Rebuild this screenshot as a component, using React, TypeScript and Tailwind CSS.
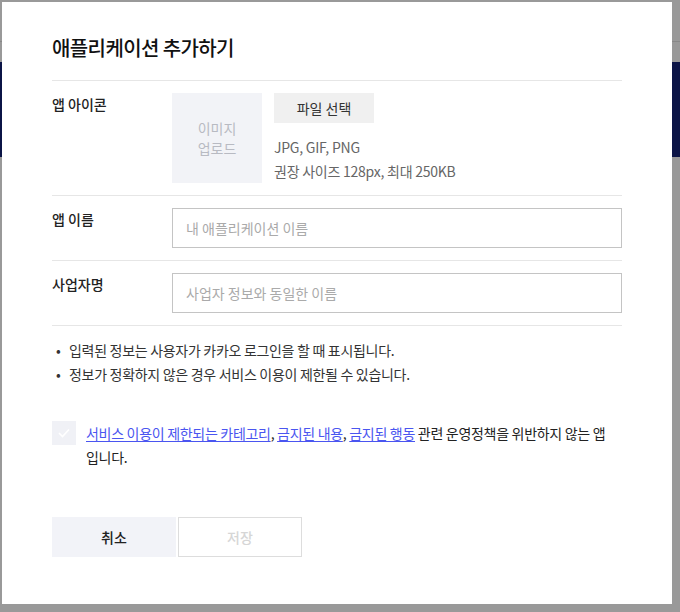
import React from "react";

// Backdrop page (dimmed) with the "add application" modal on top
const font = { fontFamily: '"Noto Sans CJK KR", "Noto Sans", sans-serif' };

function FieldRow({ label, children }: { label: string; children: React.ReactNode }) {
  return (
    <div className="flex border-b border-[#e6e6e6] py-[12px]">
      <div className="w-[120px] shrink-0 pt-[1px] text-[14px] leading-[20px] font-medium text-[#222]">
        {label}
      </div>
      <div className="flex-1">{children}</div>
    </div>
  );
}

export default function App() {
  return (
    <div className="relative w-[680px] h-[612px] overflow-hidden bg-[#999999]" style={font}>
      {/* dimmed page underneath */}
      <div className="h-[42px] border-b border-[#888]" />
      <div className="mt-[20px] h-[95px] bg-[#0b1446]" />

      {/* modal */}
      <div className="absolute left-[2px] top-[2px] w-[670px] h-[602px] bg-white px-[50px]">
        <h2 className="pt-[32px] pb-[18px] text-[20px] leading-[28px] font-medium tracking-[-0.6px] text-[#111] border-b border-[#e6e6e6]">
          애플리케이션 추가하기
        </h2>

        <FieldRow label="앱 아이콘">
          <div className="flex gap-[12px]">
            <div className="w-[90px] h-[90px] bg-[#f2f3f7] flex items-center justify-center text-center text-[14px] leading-[20px] text-[#b8bac2]">
              이미지
              <br />
              업로드
            </div>
            <div>
              <button className="w-[100px] h-[30px] bg-[#f0f0f0] text-[14px] text-[#333]">파일 선택</button>
              <div className="mt-[12px] text-[14px] leading-[24px] tracking-[-0.25px] text-[#666]">
                <p>JPG, GIF, PNG</p>
                <p>권장 사이즈 128px, 최대 250KB</p>
              </div>
            </div>
          </div>
        </FieldRow>

        <FieldRow label="앱 이름">
          <input
            className="w-full h-[40px] border border-[#c4c4c4] px-[13px] text-[14px] text-[#333] placeholder:text-[#aaaaaa] outline-none"
            placeholder="내 애플리케이션 이름"
          />
        </FieldRow>

        <FieldRow label="사업자명">
          <input
            className="w-full h-[40px] border border-[#c4c4c4] px-[13px] text-[14px] text-[#333] placeholder:text-[#aaaaaa] outline-none"
            placeholder="사업자 정보와 동일한 이름"
          />
        </FieldRow>

        <ul className="pt-[12px] text-[14px] leading-[24px] tracking-[-0.3px] text-[#333]">
          <li className="flex">
            <span className="w-[17px] pl-[4px]">•</span>입력된 정보는 사용자가 카카오 로그인을 할 때 표시됩니다.
          </li>
          <li className="flex">
            <span className="w-[17px] pl-[4px]">•</span>정보가 정확하지 않은 경우 서비스 이용이 제한될 수 있습니다.
          </li>
        </ul>

        <div className="mt-[35px] flex gap-[10px]">
          <div className="w-[24px] h-[24px] shrink-0 bg-[#f0f1f6] flex items-center justify-center">
            <svg width="12" height="10" viewBox="0 0 12 10" fill="none">
              <path d="M1 5l3.5 3.5L11 1.5" stroke="#fff" strokeWidth="1.6" />
            </svg>
          </div>
          <p className="text-[14px] leading-[24px] tracking-[-0.3px] text-[#222]">
            <a className="text-[#4a55f0] underline underline-offset-2">서비스 이용이 제한되는 카테고리</a>,{" "}
            <a className="text-[#4a55f0] underline underline-offset-2">금지된 내용</a>,{" "}
            <a className="text-[#4a55f0] underline underline-offset-2">금지된 행동</a> 관련 운영정책을 위반하지 않는 앱
            <br />
            입니다.
          </p>
        </div>

        <div className="mt-[48px] flex gap-[2px]">
          <button className="w-[124px] h-[40px] bg-[#f2f3f8] text-[14px] font-medium text-[#222]">취소</button>
          <button className="w-[124px] h-[40px] border border-[#dddddd] text-[14px] font-medium text-[#d6d6d6]">
            저장
          </button>
        </div>
      </div>
    </div>
  );
}
